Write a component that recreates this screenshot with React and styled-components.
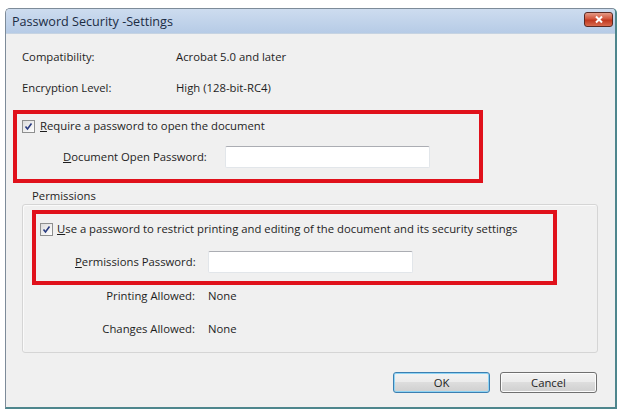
import React from 'react'
import styled, { createGlobalStyle } from 'styled-components'

const GlobalStyle = createGlobalStyle`
  body {
    margin: 0;
    background: #ffffff;
    font-family: "Open Sans", "Noto Sans", sans-serif;
    font-size: 11.3px;
    color: #1e1e1e;
  }
`

const Window = styled.div`
  margin: 8px 0 0 5px;
  width: 612px;
  height: 401px;
  box-sizing: border-box;
  border: 1px solid #7d8b99;
  border-right: 2px solid #4e868d;
  border-bottom: 2px solid #4e868d;
  border-radius: 5px 5px 0 0;
  background: #f0f0f0;
  display: flex;
  flex-direction: column;
  overflow: hidden;
`

const TitleBar = styled.div`
  height: 24px;
  flex: none;
  display: flex;
  align-items: flex-start;
  justify-content: space-between;
  padding: 0 2px 0 6px;
  background: linear-gradient(#cddcef, #b6cbe6);
  border-bottom: 1px solid #c6d3e2;
`

const Title = styled.span`
  margin-top: 5px;
  font-size: 12.6px;
  line-height: 16px;
  color: #1b2c44;
`

const CloseButton = styled.div`
  margin-top: 3px;
  width: 29px;
  height: 15px;
  box-sizing: border-box;
  border: 1px solid #5a2a24;
  border-radius: 3px;
  background: linear-gradient(#e49a86 0%, #d2553c 45%, #c0381f 55%, #d86a4e 100%);
  display: flex;
  align-items: center;
  justify-content: center;
`

const Content = styled.div`
  flex: 1;
  display: flex;
  flex-direction: column;
  align-items: flex-start;
`

const InfoList = styled.div`
  margin: 15px 0 0 16px;
  display: grid;
  grid-template-columns: 154px auto;
  row-gap: 15px;
  line-height: 16px;
`

const RedFrame = styled.div`
  box-sizing: border-box;
  width: ${p => p.w}px;
  height: ${p => p.h}px;
  margin: ${p => p.m || 0};
  border: 4px solid #e0111b;
  padding: ${p => p.pad};
`

const CheckRow = styled.label`
  display: flex;
  align-items: center;
  gap: ${p => p.gap}px;
  line-height: 16px;
`

const Box = styled.span`
  width: 13px;
  height: 13px;
  box-sizing: border-box;
  border: 1px solid #8e8f8f;
  background: linear-gradient(135deg, #dcdcdc, #ffffff);
  display: flex;
  align-items: center;
  justify-content: center;
`

const FieldRow = styled.div`
  margin-top: ${p => p.top}px;
  padding-left: ${p => p.indent}px;
  display: flex;
  align-items: center;
`

const FieldLabel = styled.span`
  width: ${p => p.w}px;
  line-height: 16px;
`

const TextBox = styled.div`
  width: 205px;
  height: 22px;
  box-sizing: border-box;
  background: #fff;
  border: 1px solid #e2e6ea;
  border-top-color: #abadb3;
  border-radius: 2px;
`

const GroupLabel = styled.div`
  margin: 5px 0 0 26px;
  line-height: 16px;
`

const GroupBox = styled.div`
  margin-left: 16px;
  width: 576px;
  height: 149px;
  box-sizing: border-box;
  border: 1px solid #d5d5d5;
  border-radius: 3px;
  box-shadow: inset 1px 1px 0 #fafafa;
  padding: 5px 0 0 9px;
`

const AllowedList = styled.div`
  margin-top: 3px;
  display: grid;
  grid-template-columns: 163px auto;
  column-gap: 13px;
  row-gap: 17px;
  line-height: 16px;
`

const RightLabel = styled.span`
  text-align: right;
`

const ButtonBar = styled.div`
  align-self: stretch;
  margin-top: 19px;
  padding-right: 18px;
  display: flex;
  justify-content: flex-end;
  gap: 10px;
`

const Button = styled.button`
  width: 97px;
  height: 21px;
  box-sizing: border-box;
  font-family: inherit;
  font-size: 11.3px;
  color: #1e1e1e;
  border-radius: 3px;
  border: 1px solid ${p => (p.primary ? '#3c7fb1' : '#707070')};
  background: linear-gradient(#f3f3f3 0%, #ebebeb 49%, #dddddd 50%, #cfcfcf 100%);
  box-shadow: ${p => (p.primary ? 'inset 0 0 0 1px #8fd4f4' : 'inset 0 0 0 1px #fcfcfc')};
  padding: 0;
`

const Check = () => (
  <Box>
    <svg width="9" height="9" viewBox="0 0 9 9">
      <path d="M1.5 4.5 L3.5 7 L7.5 1.5" fill="none" stroke="#2a3c80" strokeWidth="1.6" />
    </svg>
  </Box>
)

export default function App() {
  return (
    <>
      <GlobalStyle />
      <Window>
        <TitleBar>
          <Title>Password Security -Settings</Title>
          <CloseButton>
            <svg width="10" height="9" viewBox="0 0 10 9">
              <path d="M2 1.5 L8 7.5 M8 1.5 L2 7.5" stroke="#fff" strokeWidth="2" />
            </svg>
          </CloseButton>
        </TitleBar>
        <Content>
          <InfoList>
            <span>Compatibility:</span>
            <span>Acrobat 5.0 and later</span>
            <span>Encryption Level:</span>
            <span>High (128-bit-RC4)</span>
          </InfoList>

          <RedFrame w={470} h={73} m="14px 0 0 7px" pad="4px 0 0 5px">
            <CheckRow gap={5}>
              <Check />
              <span><u>R</u>equire a password to open the document</span>
            </CheckRow>
            <FieldRow top={12} indent={41}>
              <FieldLabel w={162}><u>D</u>ocument Open Password:</FieldLabel>
              <TextBox />
            </FieldRow>
          </RedFrame>

          <GroupLabel>Permissions</GroupLabel>
          <GroupBox>
            <RedFrame w={525} h={75} pad="7px 0 0 4px">
              <CheckRow gap={4}>
                <Check />
                <span><u>U</u>se a password to restrict printing and editing of the document and its security settings</span>
              </CheckRow>
              <FieldRow top={14} indent={35}>
                <FieldLabel w={133}><u>P</u>ermissions Password:</FieldLabel>
                <TextBox />
              </FieldRow>
            </RedFrame>
            <AllowedList>
              <RightLabel>Printing Allowed:</RightLabel>
              <span>None</span>
              <RightLabel>Changes Allowed:</RightLabel>
              <span>None</span>
            </AllowedList>
          </GroupBox>

          <ButtonBar>
            <Button primary>OK</Button>
            <Button>Cancel</Button>
          </ButtonBar>
        </Content>
      </Window>
    </>
  )
}
